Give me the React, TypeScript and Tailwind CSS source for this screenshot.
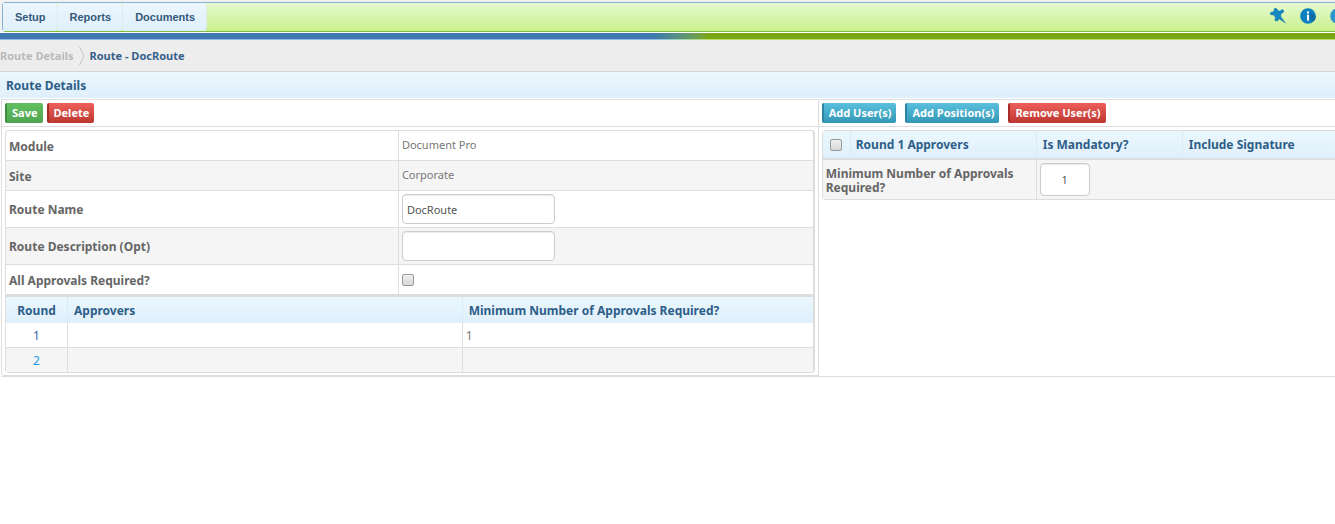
import { useState } from "react";
import type { ReactNode } from "react";

const menuItems = ["Setup", "Reports", "Documents"];

const checkboxClass =
  "block h-3 w-3 shrink-0 appearance-none rounded-xs border border-[#9a9a9a] bg-linear-to-b from-[#efefef] to-[#d8d8d8] checked:bg-[#2f7fb5] checked:bg-none";

const inputClass =
  "block rounded border border-[#cccccc] bg-white text-[11px] text-[#555555] shadow-[inset_0_1px_1px_rgba(0,0,0,0.08)] outline-none focus:border-[#5bb0d8]";

const tones = {
  green: "border-l-[#3d8f3f] bg-linear-to-b from-[#62c060] to-[#50a351]",
  red: "border-l-[#a92b27] bg-linear-to-b from-[#ee5f5b] to-[#bd3630]",
  blue: "border-l-[#2a86a3] bg-linear-to-b from-[#5bc0de] to-[#3097b4]",
};

function ActionButton({ tone, children }: { tone: keyof typeof tones; children: ReactNode }) {
  return (
    <button
      type="button"
      className={`h-5 rounded-xs border-l-2 px-[5px] text-[11px] leading-5 font-bold whitespace-nowrap text-white ${tones[tone]}`}
    >
      {children}
    </button>
  );
}

function PinIcon() {
  return (
    <svg viewBox="0 0 16 16" className="h-4 w-4" aria-hidden="true">
      <path
        d="M4.4 0.4 L6.4 0.4 L8 2.6 L9.6 3.2 L12.6 1.4 L14 3.6 L10.6 6.4 L10.9 9 L15.2 14.8 L9.2 10.8 L7.4 13 L5 12.4 L5.4 9.3 L4 7 L0.6 6.6 L0.6 4.4 L3.8 3.8 Z"
        fill="#1688c4"
        stroke="#0f6fa6"
        strokeWidth="0.6"
        strokeLinejoin="round"
      />
    </svg>
  );
}

function InfoIcon() {
  return (
    <svg viewBox="0 0 16 16" className="h-4 w-4" aria-hidden="true">
      <circle cx="8" cy="8" r="7.8" fill="#0f80bf" />
      <path d="M10 12 L14 13 A7.8 7.8 0 0 0 15.8 8 L10 4 Z" fill="#0b6ca5" />
      <rect x="7" y="3.4" width="2" height="2" fill="#ffffff" />
      <rect x="7" y="6.6" width="2" height="6" fill="#ffffff" />
    </svg>
  );
}

function HelpIcon() {
  return (
    <svg viewBox="0 0 16 16" className="h-4 w-4" aria-hidden="true">
      <circle cx="8" cy="8" r="7.8" fill="#2c97cf" />
      <path
        d="M5.8 6.2 A2.2 2.2 0 1 1 8 8.6 V10 M8 11.4 V12.8"
        fill="none"
        stroke="#ffffff"
        strokeWidth="1.5"
      />
    </svg>
  );
}

function TopBar() {
  return (
    <header className="overflow-hidden">
      <div className="bg-[#f1f1f1] pt-[2px] pl-[2px]">
        <div className="flex h-[30px] items-stretch rounded-l border-t border-b border-l border-t-[#86b0d4] border-b-[#7dbb42] border-l-[#86b0d4] bg-linear-to-b from-[#e6fad0] to-[#c9f08c]">
          <nav className="flex">
            {menuItems.map((item) => (
              <a
                key={item}
                href={`#${item.toLowerCase()}`}
                className="flex items-center rounded-r border-r border-[#dfe9ee] bg-linear-to-b from-[#ecf6fd] to-[#dfeffb] pr-[11px] pl-3 font-['Liberation_Sans',Arial,sans-serif] text-[11px] font-bold text-[#35597a]"
              >
                {item}
              </a>
            ))}
          </nav>
          <div className="-mr-[11px] ml-auto flex items-center gap-[14px] pb-[2px]">
            <button type="button" aria-label="Pin">
              <PinIcon />
            </button>
            <button type="button" aria-label="Information">
              <InfoIcon />
            </button>
            <button type="button" aria-label="Help">
              <HelpIcon />
            </button>
          </div>
        </div>
      </div>
      <div className="mt-px h-[6px] bg-linear-to-r from-[#3f79ad] from-49% to-[#7aa614] to-53%" />
      <div className="h-px bg-linear-to-r from-[#8fbde8] from-49% to-[#b9de6c] to-53%" />
    </header>
  );
}

function Breadcrumb() {
  return (
    <nav className="flex h-8 items-center border-b border-[#d5d5d5] bg-[#ededed] pt-px text-[11px] font-bold">
      <a href="#routes" className="text-[#b9b9b9]">
        Route Details
      </a>
      <svg viewBox="0 0 6 20" className="mx-[5px] h-5 w-[6px]" aria-hidden="true">
        <path d="M0.5 0.5 L5 10 L0.5 19.5" fill="none" stroke="#c4c4c4" />
      </svg>
      <span className="text-[#35608a]">Route - DocRoute</span>
    </nav>
  );
}

const labelCell = "border-r border-[#dddddd] px-[3px] pt-[2px] text-left font-bold text-[#666666]";
const valueCell = "border-b border-[#dddddd] px-[3px] text-[11px] text-[#777777]";
const headFill = "bg-linear-to-b from-[#ebf7fe] to-[#dfeffb] text-[#2e5e88]";
const headRule = "border-r border-[#d9ebf8]";
const headRuleRaised = "border-r border-b-2 border-r-[#d9ebf8] border-b-[#dddddd]";

function DetailsTable() {
  const [name, setName] = useState("DocRoute");
  const [description, setDescription] = useState("");
  const [all, setAll] = useState(false);
  return (
    <table className="w-full table-fixed border-separate border-spacing-0 rounded-t border border-r-2 border-b-0 border-[#dddddd]">
      <colgroup>
        <col className="w-[48.7%]" />
        <col />
      </colgroup>
      <tbody>
        <tr className="h-[30px]">
          <th scope="row" className={`${labelCell} border-b`}>Module</th>
          <td className={valueCell}>Document Pro</td>
        </tr>
        <tr className="h-[30px] bg-[#f5f5f5]">
          <th scope="row" className={`${labelCell} border-b`}>Site</th>
          <td className={valueCell}>Corporate</td>
        </tr>
        <tr className="h-[37px]">
          <th scope="row" className={`${labelCell} border-b`}>
            <label htmlFor="route-name">Route Name</label>
          </th>
          <td className={valueCell}>
            <input
              id="route-name"
              type="text"
              value={name}
              onChange={(e) => setName(e.target.value)}
              className={`${inputClass} h-[30px] w-[153px] px-1`}
            />
          </td>
        </tr>
        <tr className="h-[37px] bg-[#f5f5f5]">
          <th scope="row" className={`${labelCell} border-b`}>
            <label htmlFor="route-description">Route Description (Opt)</label>
          </th>
          <td className={valueCell}>
            <input
              id="route-description"
              type="text"
              value={description}
              onChange={(e) => setDescription(e.target.value)}
              className={`${inputClass} h-[30px] w-[153px] px-1`}
            />
          </td>
        </tr>
        <tr className="h-[29px]">
          <th scope="row" className={labelCell}>
            <label htmlFor="all-approvals">All Approvals Required?</label>
          </th>
          <td className="px-[3px]">
            <input
              id="all-approvals"
              type="checkbox"
              checked={all}
              onChange={(e) => setAll(e.target.checked)}
              className={checkboxClass}
            />
          </td>
        </tr>
      </tbody>
    </table>
  );
}

function RoundsTable() {
  return (
    <table className="w-full table-fixed border-separate border-spacing-0 rounded-b border border-t-3 border-r-2 border-[#dddddd]">
      <colgroup>
        <col className="w-[62px]" />
        <col />
        <col className="w-[43.4%]" />
      </colgroup>
      <thead>
        <tr className={`h-[26px] text-left ${headFill}`}>
          <th scope="col" className={`${headRule} pt-[2px] text-center`}>Round</th>
          <th scope="col" className={`${headRule} px-[6px] pt-[2px]`}>Approvers</th>
          <th scope="col" className="px-[6px] pt-[2px]">Minimum Number of Approvals Required?</th>
        </tr>
      </thead>
      <tbody>
        <tr className="h-[25px] text-[#777777]">
          <td className="border-r border-b border-[#dddddd] pt-[2px] text-center">
            <a href="#round-1" className="text-[#2b6ca8]">1</a>
          </td>
          <td className="border-r border-b border-[#dddddd]" />
          <td className="border-b border-[#dddddd] px-[3px] pt-[2px]">1</td>
        </tr>
        <tr className="h-[24px] bg-[#f5f5f5]">
          <td className="border-r border-[#dddddd] pt-[2px] text-center">
            <a href="#round-2" className="text-[#2196e8]">2</a>
          </td>
          <td className="border-r border-[#dddddd]" />
          <td />
        </tr>
      </tbody>
    </table>
  );
}

function ApproversTable() {
  const [selected, setSelected] = useState(false);
  const [minimum, setMinimum] = useState("1");
  return (
    <table className="w-full table-fixed border-separate border-spacing-0 rounded-l border border-r-0 border-[#dddddd]">
      <colgroup>
        <col className="w-[28px]" />
        <col className="w-[186px]" />
        <col className="w-[146px]" />
        <col />
      </colgroup>
      <thead>
        <tr className={`h-[29px] text-left ${headFill}`}>
          <th scope="col" className={`${headRuleRaised} pl-[7px]`}>
            <input
              type="checkbox"
              aria-label="Select all approvers"
              checked={selected}
              onChange={(e) => setSelected(e.target.checked)}
              className={checkboxClass}
            />
          </th>
          <th scope="col" className={`${headRuleRaised} px-[5px]`}>
            Round 1 Approvers
          </th>
          <th scope="col" className={`${headRuleRaised} px-[6px]`}>
            Is Mandatory?
          </th>
          <th scope="col" className="border-b-2 border-[#dddddd] px-[6px]">Include Signature</th>
        </tr>
      </thead>
      <tbody>
        <tr className="h-[39px] bg-[#f5f5f5]">
          <th scope="row" colSpan={2} className={`${labelCell} leading-[14px]`}>
            <label htmlFor="minimum-approvals">Minimum Number of Approvals Required?</label>
          </th>
          <td colSpan={2} className="px-[3px]">
            <input
              id="minimum-approvals"
              type="text"
              value={minimum}
              onChange={(e) => setMinimum(e.target.value)}
              className={`${inputClass} h-[33px] w-[50px] text-center`}
            />
          </td>
        </tr>
      </tbody>
    </table>
  );
}

export default function App() {
  return (
    <div className="min-h-screen bg-white font-['Noto_Sans','Open_Sans',sans-serif] text-xs">
      <TopBar />
      <Breadcrumb />
      <main>
        <h1 className={`flex h-[26px] items-center px-[6px] pt-[2px] font-bold ${headFill}`}>
          Route Details
        </h1>
        <div className="mt-px ml-px flex items-stretch border-t border-b border-[#dddddd]">
          <section className="w-[61.3%] shrink-0 rounded-bl border-r border-b border-l border-[#dddddd]">
            <div className="flex h-[27px] items-center gap-1 border-b border-[#dddddd] px-[3px]">
              <ActionButton tone="green">Save</ActionButton>
              <ActionButton tone="red">Delete</ActionButton>
            </div>
            <div className="px-[3px] pt-[3px] pb-[2px]">
              <DetailsTable />
              <RoundsTable />
            </div>
          </section>
          <section className="min-w-0 flex-1">
            <div className="flex h-[27px] items-center gap-[9px] border-b border-[#dddddd] px-[3px]">
              <ActionButton tone="blue">Add User(s)</ActionButton>
              <ActionButton tone="blue">Add Position(s)</ActionButton>
              <ActionButton tone="red">Remove User(s)</ActionButton>
            </div>
            <div className="pt-[3px] pl-[3px]">
              <ApproversTable />
            </div>
          </section>
        </div>
      </main>
    </div>
  );
}
